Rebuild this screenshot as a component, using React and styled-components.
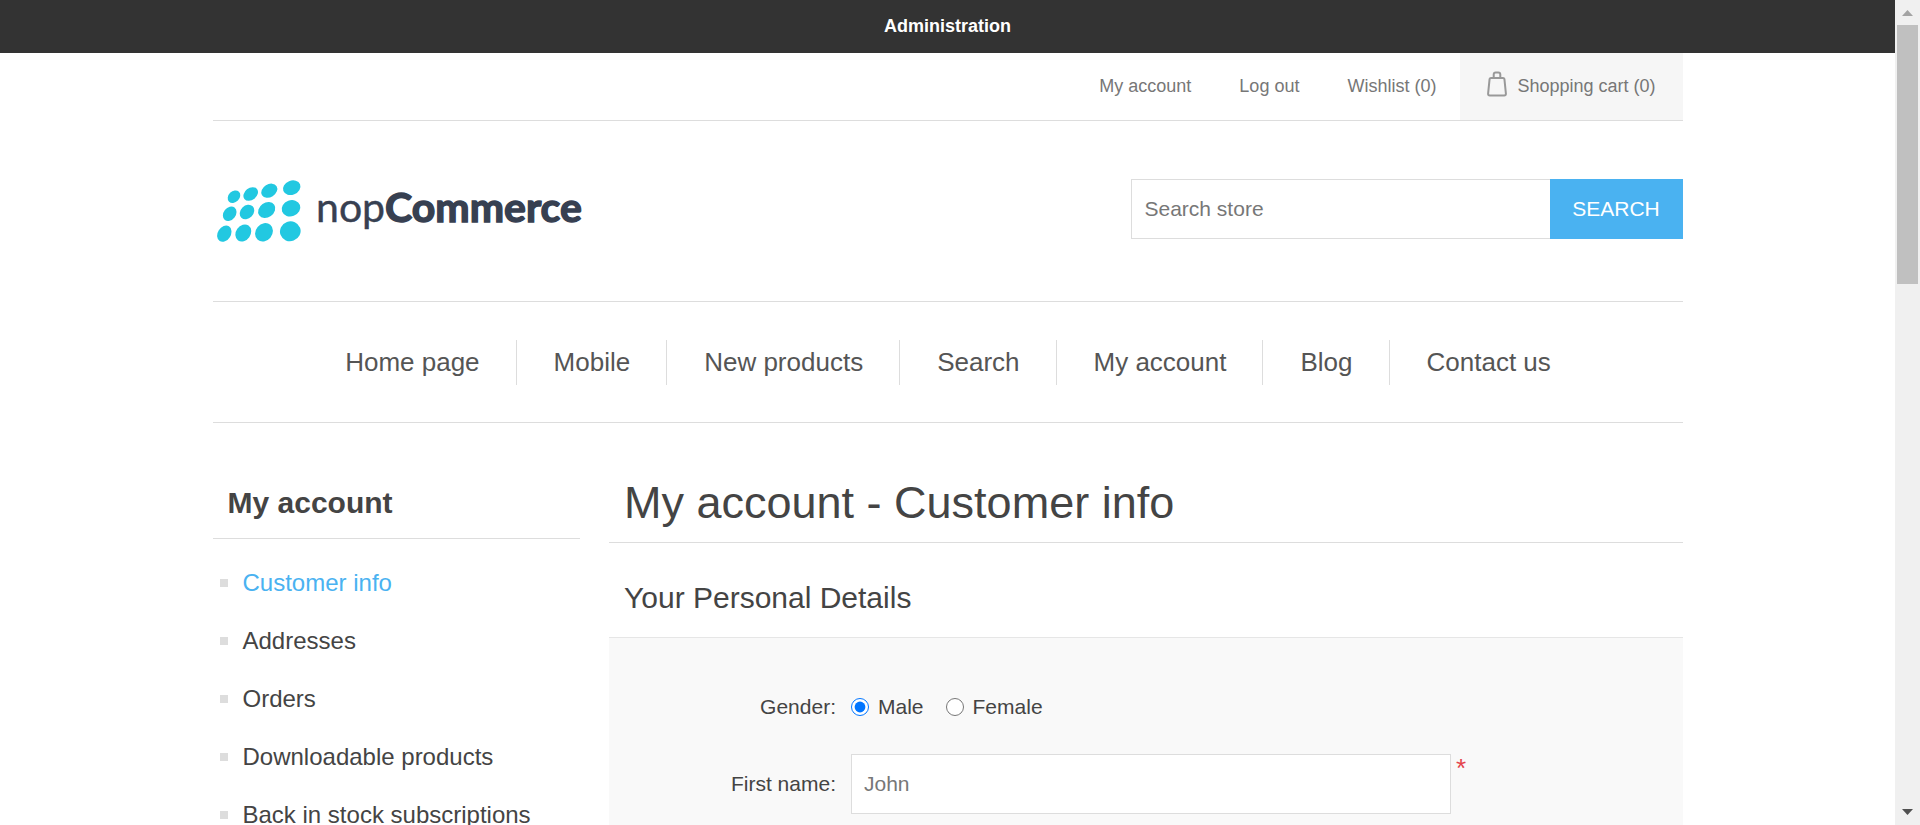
import React from 'react';
import styled, { createGlobalStyle } from 'styled-components';

const GlobalStyle = createGlobalStyle`
  *, *::before, *::after { box-sizing: border-box; }
  body {
    margin: 0;
    background: #fff;
    color: #444;
    font-family: "Liberation Sans", Arial, Helvetica, sans-serif;
    font-size: 21px;
  }
  h1, h2, ul { margin: 0; padding: 0; font-weight: normal; }
  ul { list-style: none; }
  a { color: inherit; text-decoration: none; }
  input, button { font: inherit; margin: 0; }
`;

const Frame = styled.div`
  display: flex;
  height: 100vh;
  overflow: hidden;
`;

const Page = styled.div`
  flex: 1;
  min-width: 0;
  overflow: hidden;
`;

const AdminBar = styled.div`
  display: flex;
  align-items: center;
  justify-content: center;
  height: 53px;
  background: #333;
  color: #fff;
  font-size: 18px;
  font-weight: bold;
`;

const Wrapper = styled.div`
  max-width: 1470px;
  margin: 0 auto;
`;

const HeaderLinks = styled.ul`
  display: flex;
  justify-content: flex-end;
  height: 68px;
  border-bottom: 1px solid #ddd;
  color: #777;
  font-size: 18px;
`;

const HeaderLink = styled.a`
  display: flex;
  align-items: center;
  gap: 10px;
  height: 100%;
  padding: 0 ${(p) => (p.$cart ? 27 : 24)}px;
  background: ${(p) => (p.$cart ? '#f6f6f6' : 'transparent')};
`;

const BagIcon = styled.svg`
  width: 20px;
  height: 26px;
  margin-bottom: 5px;
`;

const HeaderMain = styled.header`
  display: flex;
  justify-content: space-between;
  align-items: center;
  height: 181px;
  padding-bottom: 4px;
  border-bottom: 1px solid #ddd;
`;

const LogoLink = styled.a`
  display: block;
  padding-left: 3px;
`;

const LogoSvg = styled.svg`
  display: block;
  width: 376px;
  height: 70px;
`;

const SearchForm = styled.form`
  display: flex;
  height: 60px;
`;

const SearchBox = styled.input`
  width: 419px;
  padding: 0 13px;
  border: 1px solid #ddd;
  border-right: 0;
  border-radius: 0;
  color: #777;
  &::placeholder { color: #777; opacity: 1; }
`;

const SearchButton = styled.button`
  width: 133px;
  padding: 0;
  border: 0;
  background: #4ab2f1;
  color: #fff;
  text-transform: uppercase;
`;

const Menu = styled.ul`
  display: flex;
  justify-content: center;
  padding: 38px 0 37px;
  border-bottom: 1px solid #ddd;
`;

const MenuItem = styled.li`
  border-left: 1px solid #ddd;
  &:first-child { border-left: 0; }
`;

const MenuLink = styled.a`
  display: block;
  padding: 0 36px 0 37px;
  color: #555;
  font-size: 26px;
  line-height: 45px;
`;

const Columns = styled.div`
  display: flex;
  align-items: flex-start;
  gap: 29px;
  padding-top: 45px;
`;

const Sidebar = styled.aside`
  flex: 0 0 25%;
`;

const SidebarTitle = styled.h2`
  padding: 0 15px;
  border-bottom: 1px solid #ddd;
  font-size: 30px;
  font-weight: bold;
  line-height: 70px;
`;

const SidebarList = styled.ul`
  padding: 15px 7px;
`;

const SidebarItem = styled.li`
  display: flex;
  align-items: center;
  gap: 15px;
  height: 58px;
  font-size: 24px;
  color: ${(p) => (p.$active ? '#4ab2f1' : '#444')};
  &::before {
    content: "";
    width: 8px;
    height: 8px;
    background: #ddd;
  }
`;

const Content = styled.main`
  flex: 1;
  min-width: 0;
`;

const PageTitle = styled.h1`
  padding: 0 15px 4px;
  border-bottom: 1px solid #ddd;
  font-size: 45px;
  line-height: 70px;
`;

const SectionTitle = styled.h2`
  padding: 20px 15px 4px;
  font-size: 30px;
  line-height: 70px;
`;

const FormPanel = styled.form`
  display: flex;
  flex-direction: column;
  gap: 17px;
  padding: 39px 0 45px;
  border-top: 1px solid #e6e6e6;
  background: #f9f9f9;
`;

const FormRow = styled.div`
  display: flex;
  align-items: center;
  gap: 15px;
  height: 60px;
`;

const FieldLabel = styled.label`
  width: 227px;
  text-align: right;
`;

const RadioGroup = styled.div`
  display: flex;
  align-items: center;
  gap: 22px;
`;

const RadioLabel = styled.label`
  display: flex;
  align-items: center;
  gap: 9px;
`;

const Radio = styled.input`
  width: 18px;
  height: 18px;
`;

const Field = styled.div`
  display: flex;
  gap: 5px;
  height: 60px;
`;

const TextInput = styled.input`
  width: 600px;
  height: 60px;
  padding: 0 12px;
  border: 1px solid #ddd;
  border-radius: 0;
  background: #fff;
  color: #777;
`;

const Required = styled.span`
  color: #e4434b;
  font-size: 26px;
  line-height: 28px;
`;

const ScrollTrack = styled.div`
  flex: 0 0 25px;
  display: flex;
  flex-direction: column;
  align-items: center;
  background: #f0f0f0;
`;

const ScrollArrow = styled.svg`
  display: block;
  width: 25px;
  height: 25px;
`;

const ScrollThumb = styled.div`
  width: 21px;
  height: 33.4%;
  max-height: 259px;
  background: #c0c0c0;
`;

const ScrollRest = styled.div`
  flex: 1;
`;

const logoDots = [
  [18, 22.7, 7, 5.5, -45], [34.7, 20, 8, 6, -38], [53.3, 16.7, 8.6, 6.4, -32], [75.7, 13.7, 9, 7, -22],
  [13.7, 39.7, 7.9, 6.1, -52], [31, 38, 8, 6.4, -45], [50.7, 36, 9.2, 7.2, -35], [75, 34.3, 9.5, 8, -20],
  [8.3, 59.7, 8.7, 6.5, -58], [27.3, 59, 9.1, 7.3, -55], [48, 58.3, 9.8, 8.3, -50], [74.3, 57.3, 10.4, 9.9, -20],
];

function Logo() {
  return (
    <LogoSvg viewBox="0 0 376 70" role="img" aria-label="nopCommerce">
      <g fill="#22c8e1">
        {logoDots.map(([x, y, rx, ry, a]) => (
          <ellipse key={`${x}-${y}`} cx={x} cy={y} rx={rx} ry={ry} transform={`rotate(${a} ${x} ${y})`} />
        ))}
      </g>
      <text x="100" y="48" fill="#374051" stroke="#374051" fontFamily="Lato, 'Open Sans', sans-serif" fontSize="41" strokeWidth="0.4">
        nop<tspan fontWeight="700" strokeWidth="1.4">Commerce</tspan>
      </text>
    </LogoSvg>
  );
}

function Bag() {
  return (
    <BagIcon viewBox="0 0 20 26" fill="none" stroke="#999" strokeWidth="2" aria-hidden="true">
      <path d="M4 7h12q1.200 0 1.400 1l1.500 14.600q.1 1.900-1.700 1.900H2.800Q1 24.500 1.100 22.600L2.600 8Q2.800 7 4 7z" />
      <path d="M6.700 7V3.500Q6.700 1.500 8.700 1.500h2.600Q13.300 1.500 13.300 3.500V7" />
    </BagIcon>
  );
}

const menu = ['Home page', 'Mobile', 'New products', 'Search', 'My account', 'Blog', 'Contact us'];
const accountLinks = ['Customer info', 'Addresses', 'Orders', 'Downloadable products', 'Back in stock subscriptions'];

export default function App() {
  return (
    <>
      <GlobalStyle />
      <Frame>
        <Page>
          <AdminBar><a href="#admin">Administration</a></AdminBar>
          <Wrapper>
            <HeaderLinks>
              <li><HeaderLink href="#account">My account</HeaderLink></li>
              <li><HeaderLink href="#logout">Log out</HeaderLink></li>
              <li><HeaderLink href="#wishlist">Wishlist (0)</HeaderLink></li>
              <li><HeaderLink href="#cart" $cart><Bag />Shopping cart (0)</HeaderLink></li>
            </HeaderLinks>
            <HeaderMain>
              <LogoLink href="#home"><Logo /></LogoLink>
              <SearchForm onSubmit={(e) => e.preventDefault()}>
                <SearchBox type="text" placeholder="Search store" aria-label="Search store" />
                <SearchButton type="submit">Search</SearchButton>
              </SearchForm>
            </HeaderMain>
            <nav>
              <Menu>
                {menu.map((m) => (
                  <MenuItem key={m}><MenuLink href="#menu">{m}</MenuLink></MenuItem>
                ))}
              </Menu>
            </nav>
            <Columns>
              <Sidebar>
                <SidebarTitle>My account</SidebarTitle>
                <SidebarList>
                  {accountLinks.map((l, i) => (
                    <SidebarItem key={l} $active={i === 0}><a href="#account">{l}</a></SidebarItem>
                  ))}
                </SidebarList>
              </Sidebar>
              <Content>
                <PageTitle>My account - Customer info</PageTitle>
                <SectionTitle>Your Personal Details</SectionTitle>
                <FormPanel>
                  <FormRow role="radiogroup" aria-labelledby="gender-label">
                    <FieldLabel as="span" id="gender-label">Gender:</FieldLabel>
                    <RadioGroup>
                      <RadioLabel><Radio type="radio" name="gender" defaultChecked />Male</RadioLabel>
                      <RadioLabel><Radio type="radio" name="gender" />Female</RadioLabel>
                    </RadioGroup>
                  </FormRow>
                  <FormRow>
                    <FieldLabel htmlFor="first-name">First name:</FieldLabel>
                    <Field>
                      <TextInput id="first-name" type="text" defaultValue="John" required />
                      <Required>*</Required>
                    </Field>
                  </FormRow>
                </FormPanel>
              </Content>
            </Columns>
          </Wrapper>
        </Page>
        <ScrollTrack aria-hidden="true">
          <ScrollArrow viewBox="0 0 25 25"><path d="M7 16L12.500 10L18 16z" fill="#a3a3a3" /></ScrollArrow>
          <ScrollThumb />
          <ScrollRest />
          <ScrollArrow viewBox="0 0 25 25"><path d="M7 9L12.500 15L18 9z" fill="#505050" /></ScrollArrow>
        </ScrollTrack>
      </Frame>
    </>
  );
}
